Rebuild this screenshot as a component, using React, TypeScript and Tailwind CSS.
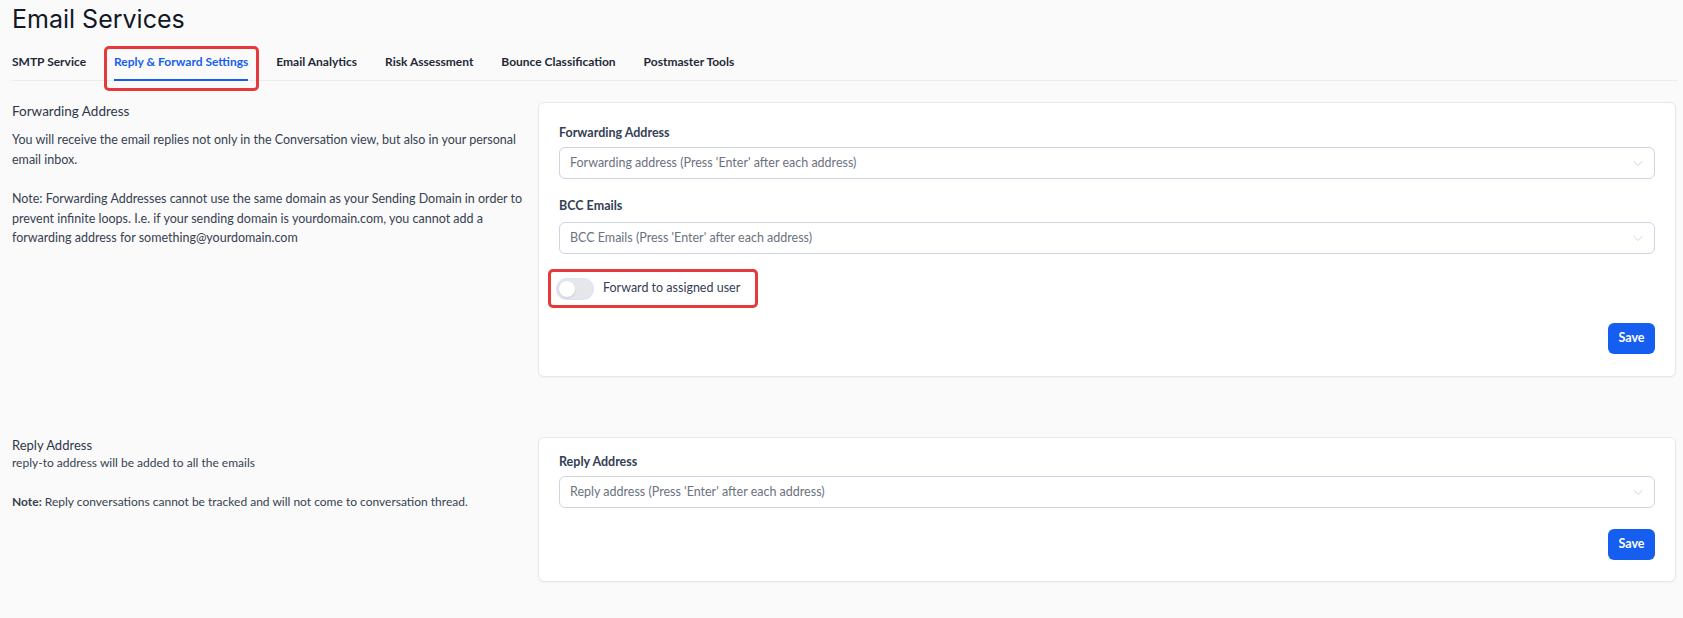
import React, { useState } from "react"

const Chevron = () => (
	<svg width="12" height="12" viewBox="0 0 12 12" fill="none" className="text-gray-300">
		<path d="M2 4.5L6 8.5l4-4" stroke="currentColor" strokeWidth="1" strokeLinecap="round" strokeLinejoin="round" />
	</svg>
)

const SelectBox = ({ placeholder }: { placeholder: string }) => (
	<div className="flex h-[32px] items-center justify-between rounded-md border border-[#d0d3e0] bg-white pl-[10px] pr-[10px] text-[12.5px] text-[#6b7280]">
		<span>{placeholder}</span>
		<Chevron />
	</div>
)

const SaveButton = () => (
	<button className="h-[31px] w-[47px] rounded-md bg-[#155eef] text-[12.5px] font-bold text-white">Save</button>
)

const tabs = [
	"SMTP Service",
	"Reply & Forward Settings",
	"Email Analytics",
	"Risk Assessment",
	"Bounce Classification",
	"Postmaster Tools",
]

const App = () => {
	const [active, setActive] = useState<number>(1)
	const [forward, setForward] = useState<boolean>(false)

	return (
		<div
			className="min-h-[618px] bg-[#fafafa] text-[#374151]"
			style={{ fontFamily: "Lato, 'Noto Sans', sans-serif" }}
		>
			<div className="pl-[12px] pr-[5px]">
				<h1
					className="pt-[3px] text-[25px] leading-[32px] font-normal text-[#111827]"
					style={{ fontFamily: "Inter, sans-serif" }}
				>
					Email Services
				</h1>

				<div className="mt-[18px] flex gap-[28px] border-b border-[#ececec] text-[12px] font-bold text-[#1f2937]">
					{tabs.map((t, i) => (
						<div key={t} className="relative -mb-px cursor-pointer" onClick={() => setActive(i)}>
							<div
								className={`border-b-2 pb-[8px] leading-[18px] ${
									i === active ? "border-[#155eef] text-[#155eef]" : "border-transparent"
								}`}
							>
								{t}
							</div>
							{i === active && (
								<div className="pointer-events-none absolute -left-[10px] -right-[11px] -top-[7px] -bottom-[10px] rounded-[5px] border-[3px] border-[#e5393b]" />
							)}
						</div>
					))}
				</div>
			</div>

			{/* forwarding */}
			<div className="mt-[21px] flex pl-[12px]">
				<div className="w-[526px] text-[12.5px] leading-[19.5px] text-[#374151]">
					<div className="text-[13.5px] leading-[18px] text-[#2d3748]">Forwarding Address</div>
					<p className="mt-[10px] whitespace-nowrap">
						You will receive the email replies not only in the Conversation view, but also in your personal
						<br />
						email inbox.
					</p>
					<p className="mt-[20px] whitespace-nowrap">
						Note: Forwarding Addresses cannot use the same domain as your Sending Domain in order to
						<br />
						prevent infinite loops. I.e. if your sending domain is yourdomain.com, you cannot add a
						<br />
						forwarding address for something@yourdomain.com
					</p>
				</div>
				<div className="w-[1138px] rounded-md border border-[#e7e8ec] bg-white px-[20px] pt-[22px] pb-[22px] shadow-[0_1px_2px_rgba(0,0,0,0.04)]">
					<div className="mb-[6px] text-[12.5px] leading-[16px] font-bold text-[#344054]">Forwarding Address</div>
					<SelectBox placeholder="Forwarding address (Press 'Enter' after each address)" />
					<div className="mt-[19px] mb-[8px] text-[12.5px] leading-[16px] font-bold text-[#344054]">BCC Emails</div>
					<SelectBox placeholder="BCC Emails (Press 'Enter' after each address)" />
					<div className="mt-[15px] -ml-[11px] flex">
						<div className="inline-flex h-[39px] items-center gap-[10px] rounded-[5px] border-[3px] border-[#e5393b] pl-[6px] pr-[15px]">
							<button
								onClick={() => setForward(!forward)}
								className={`relative h-[20px] w-[36px] rounded-full ring-1 ring-[#dbe4ff] ${
									forward ? "bg-[#155eef]" : "bg-[#e5e7eb]"
								}`}
							>
								<span
									className={`absolute top-[2px] h-[16px] w-[16px] rounded-full bg-white shadow ${
										forward ? "left-[18px]" : "left-[2px]"
									}`}
								/>
							</button>
							<span className="text-[12.5px] text-[#344054]">Forward to assigned user</span>
						</div>
					</div>
					<div className="mt-[15px] flex justify-end">
						<SaveButton />
					</div>
				</div>
			</div>

			{/* reply */}
			<div className="mt-[60px] flex pl-[12px]">
				<div className="w-[526px] text-[12px] leading-[18px] text-[#374151]">
					<div className="text-[13px] leading-[16px] text-[#2d3748]">Reply Address</div>
					<div className="mt-[1px]">reply-to address will be added to all the emails</div>
					<p className="mt-[21px]">
						<span className="font-bold">Note:</span> Reply conversations cannot be tracked and will not come to conversation
						thread.
					</p>
				</div>
				<div className="w-[1138px] rounded-md border border-[#e7e8ec] bg-white px-[20px] pt-[16px] pb-[21px] shadow-[0_1px_2px_rgba(0,0,0,0.04)]">
					<div className="mb-[6px] text-[12.5px] leading-[16px] font-bold text-[#344054]">Reply Address</div>
					<SelectBox placeholder="Reply address (Press 'Enter' after each address)" />
					<div className="mt-[21px] flex justify-end">
						<SaveButton />
					</div>
				</div>
			</div>
		</div>
	)
}

export default App
